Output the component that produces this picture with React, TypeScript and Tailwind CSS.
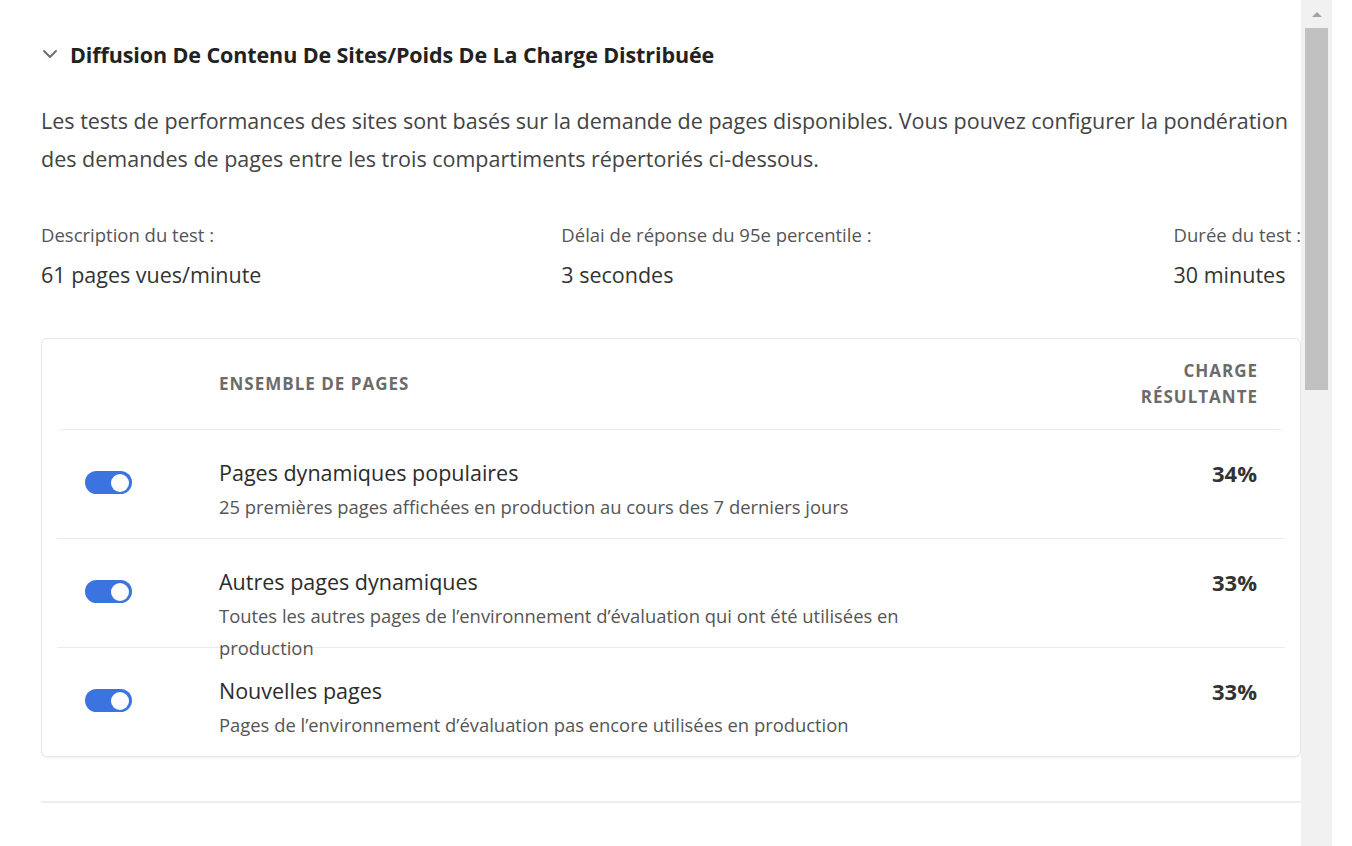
import React from "react";

const rows = [
  {
    title: "Pages dynamiques populaires",
    desc: "25 premières pages affichées en production au cours des 7 derniers jours",
    pct: "34%",
  },
  {
    title: "Autres pages dynamiques",
    desc: "Toutes les autres pages de l’environnement d’évaluation qui ont été utilisées en production",
    pct: "33%",
  },
  {
    title: "Nouvelles pages",
    desc: "Pages de l’environnement d’évaluation pas encore utilisées en production",
    pct: "33%",
  },
];

function Toggle() {
  return (
    <div className="w-[47px] h-[23px] rounded-full bg-[#3b74e0] flex items-center justify-end pr-[3px]">
      <div className="w-[18px] h-[18px] rounded-full bg-white" />
    </div>
  );
}

export default function App() {
  return (
    <div
      className="w-[1352px] h-[846px] bg-white flex overflow-hidden text-[#2c2c2c]"
      style={{ fontFamily: "'Open Sans', Lato, sans-serif" }}
    >
      <div className="w-[1301px] pl-[41px] shrink-0">
        <div className="mt-[37px] h-[36px] flex items-center gap-[11px]">
          <svg width="18" height="18" viewBox="0 0 18 18" className="text-[#6e6e6e] -mt-[2px]">
            <path d="M3 6 L9 12 L15 6" fill="none" stroke="currentColor" strokeWidth="2" strokeLinecap="round" strokeLinejoin="round" />
          </svg>
          <div className="text-[21.5px] font-bold text-[#222] tracking-[-0.1px]">
            Diffusion De Contenu De Sites/Poids De La Charge Distribuée
          </div>
        </div>
        <p className="mt-[29px] pr-[4px] text-[21.5px] leading-[38px] text-[#444]">
          Les tests de performances des sites sont basés sur la demande de pages disponibles. Vous pouvez configurer la pondération des demandes de pages entre les trois compartiments répertoriés ci-dessous.
        </p>
        <div className="mt-[46px] flex">
          <div className="w-[521px]">
            <div className="text-[18.5px] text-[#555] leading-[22px]">Description du test :</div>
            <div className="mt-[17px] text-[21.5px] text-[#333] leading-[24px]">61 pages vues/minute</div>
          </div>
          <div className="w-[613px]">
            <div className="text-[18.5px] text-[#555] leading-[22px]">Délai de réponse du 95e percentile :</div>
            <div className="mt-[17px] text-[21.5px] text-[#333] leading-[24px]">3 secondes</div>
          </div>
          <div className="flex-1">
            <div className="text-[18.5px] text-[#555] leading-[22px] whitespace-nowrap">Durée du test :</div>
            <div className="mt-[17px] text-[21.5px] text-[#333] leading-[24px]">30 minutes</div>
          </div>
        </div>
        <div className="mt-[51px] w-[1260px] h-[419px] rounded-[6px] border border-[#e6e6e6] shadow-[0_1px_2px_rgba(0,0,0,0.06)] px-[15px]">
          <div className="h-[90px] flex items-center">
            <div className="w-[162px]" />
            <div className="flex-1 text-[17px] font-bold tracking-[1px] text-[#6b6b6b]">ENSEMBLE DE PAGES</div>
            <div className="text-[17px] font-bold tracking-[1px] text-[#6b6b6b] text-right leading-[26px] pr-[27px]">
              CHARGE
              <br />
              RÉSULTANTE
            </div>
          </div>
          {rows.map((r, i) => (
            <div
              key={i}
              className={
                "h-[109px] flex border-t border-[#ebebeb] " + (i === 0 ? "rounded-t-[6px]" : "")
              }
            >
              <div className="w-[162px] pl-[28px] pt-[41px]">
                <Toggle />
              </div>
              <div className="flex-1 pt-[30px]">
                <div className="text-[21.5px] leading-[26px] text-[#2c2c2c]">{r.title}</div>
                <div className="mt-[5px] text-[18.4px] leading-[32px] text-[#555] max-w-[700px]">{r.desc}</div>
              </div>
              <div className="pt-[30px] pr-[28px] text-[22px] font-bold leading-[26px] text-[#333]">{r.pct}</div>
            </div>
          ))}
        </div>
        <div className="mt-[44px] w-[1260px] border-t-2 border-[#eeeeee]" />
      </div>
      <div className="w-[31px] h-[846px] bg-[#f1f1f1] shrink-0 flex flex-col items-center">
        <div className="h-[28px] flex items-center justify-center">
          <svg width="12" height="8" viewBox="0 0 12 8">
            <path d="M1 7 L6 2 L11 7 Z" fill="#a3a3a3" />
          </svg>
        </div>
        <div className="w-[23px] h-[362px] bg-[#c1c1c1]" />
      </div>
      <div className="flex-1 bg-white" />
    </div>
  );
}
